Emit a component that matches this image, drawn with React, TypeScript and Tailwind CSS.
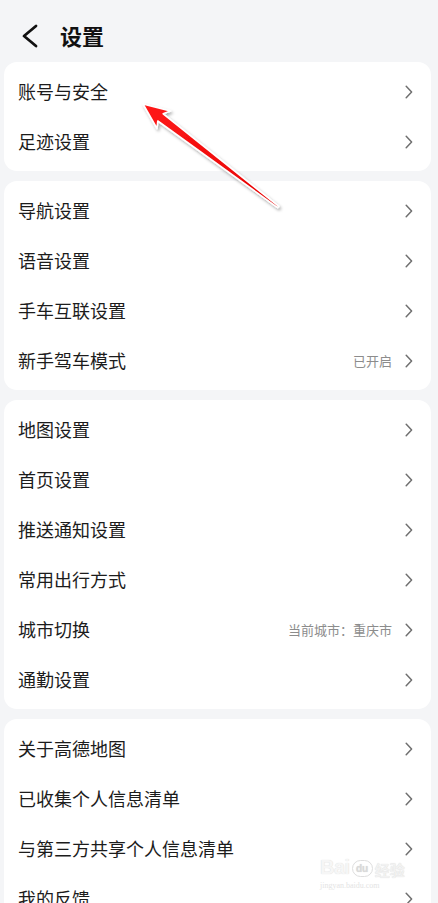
import React from "react";

const Chevron = () => (
  <svg width="8" height="14" viewBox="0 0 8 14" fill="none" className="shrink-0">
    <polyline points="1.2,1.2 6.6,7 1.2,12.8" stroke="#6f6f6f" strokeWidth="1.5" strokeLinecap="round" strokeLinejoin="round" />
  </svg>
);

type Row = { label: string; extra?: string };

const groups: Row[][] = [
  [{ label: "账号与安全" }, { label: "足迹设置" }],
  [
    { label: "导航设置" },
    { label: "语音设置" },
    { label: "手车互联设置" },
    { label: "新手驾车模式", extra: "已开启" },
  ],
  [
    { label: "地图设置" },
    { label: "首页设置" },
    { label: "推送通知设置" },
    { label: "常用出行方式" },
    { label: "城市切换", extra: "当前城市：重庆市" },
    { label: "通勤设置" },
  ],
  [
    { label: "关于高德地图" },
    { label: "已收集个人信息清单" },
    { label: "与第三方共享个人信息清单" },
    { label: "我的反馈" },
  ],
];

export default function App() {
  return (
    <div
      className="relative w-[438px] h-[903px] overflow-hidden bg-[#f4f5f7]"
      style={{ fontFamily: '"Noto Sans CJK SC", "Noto Sans", sans-serif' }}
    >
      {/* Header */}
      <div className="h-[62px] flex items-center pl-[21px] pt-[13px] pb-[1px]">
        <svg width="18" height="24" viewBox="0 0 18 24" fill="none" className="shrink-0 -mt-[2px]">
          <polyline points="15,2 3,12 15,22" stroke="#111" strokeWidth="2.8" strokeLinecap="round" strokeLinejoin="round" />
        </svg>
        <span className="ml-[21px] text-[22px] font-semibold text-[#111] leading-none -mt-[5px]">设置</span>
      </div>

      {/* Groups */}
      <div className="flex flex-col gap-[10px] pl-[4px] pr-[7px]">
        {groups.map((g, gi) => (
          <div key={gi} className="bg-white rounded-[13px] py-[4.5px]">
            {g.map((r, ri) => (
              <div key={ri} className="h-[50px] flex items-center pl-[14px] pr-[18px]">
                <span className="flex-1 text-[18px] text-[#1c1c1c] leading-none -mt-[1px]">{r.label}</span>
                {r.extra && (
                  <span className="text-[13px] text-[#8c8c8c] mr-[13px] leading-none">{r.extra}</span>
                )}
                <Chevron />
              </div>
            ))}
          </div>
        ))}
      </div>

      {/* Red annotation arrow */}
      <svg
        className="absolute left-0 top-0 pointer-events-none"
        width="438"
        height="903"
        viewBox="0 0 438 903"
      >
        <defs>
          <linearGradient id="ag" x1="143" y1="104" x2="278" y2="207" gradientUnits="userSpaceOnUse">
            <stop offset="0" stopColor="#ff1a1a" />
            <stop offset="1" stopColor="#e60000" />
          </linearGradient>
          <filter id="sh" x="-20%" y="-20%" width="140%" height="140%">
            <feDropShadow dx="1.5" dy="2" stdDeviation="1.5" floodColor="#000" floodOpacity="0.35" />
          </filter>
        </defs>
        <polygon
          points="143,104 170.4,111.1 163.2,113.8 278.8,206.4 277.6,207.6 157.8,121 157,128.5"
          fill="url(#ag)"
          stroke="#fff"
          strokeWidth="1.6"
          strokeLinejoin="round"
          filter="url(#sh)"
        />
      </svg>

      {/* Watermark */}
      <div className="absolute left-[320px] top-[857px] pointer-events-none flex flex-col items-start select-none">
        <div className="flex items-end leading-none" style={{ textShadow: "0 0 1px #d4d4d4" }}>
          <span className="text-[20px] font-bold text-[#f6f6f6] tracking-tight" style={{ fontFamily: '"Liberation Sans", sans-serif' }}>
            Bai
          </span>
          <span className="mx-[2px] w-[21px] h-[17px] rounded-full border border-[#dedede] text-[10px] font-bold text-[#dadada] flex items-center justify-center" style={{ fontFamily: '"Liberation Sans", sans-serif' }}>
            du
          </span>
          <span className="text-[15px] font-bold text-[#f2f2f2]">经验</span>
        </div>
        <span className="text-[8px] text-[#e4e4e4] mt-[5px] leading-none" style={{ fontFamily: '"Liberation Serif", serif' }}>
          jingyan.baidu.com
        </span>
      </div>
    </div>
  );
}
